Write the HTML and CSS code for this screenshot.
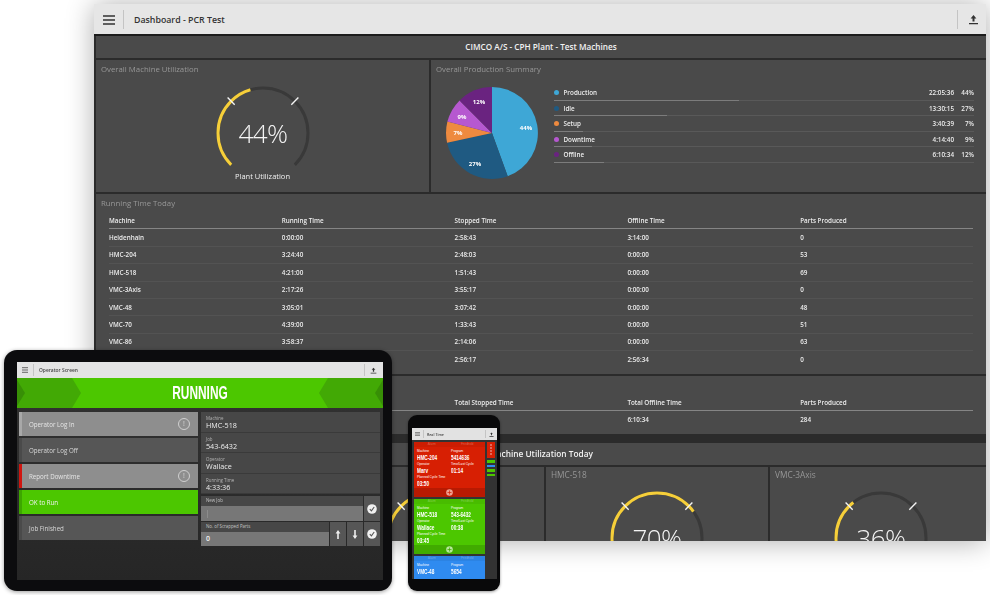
FILE: index.html
```html
<!DOCTYPE html>
<html lang="en">
<head>
    <meta charset="UTF-8">
    <title>CIMCO Dashboard</title>
    <link rel="stylesheet" href="styles.css">
</head>
<body>
    <div class="stage">
        <div class="dash">
            <div class="topbar">
                <svg class="menu-icon" width="12" height="10" viewBox="0 0 12 10"><path d="M0 1h12M0 5h12M0 9h12" stroke="#333" stroke-width="1.4"/></svg>
                <span class="bar-sep"></span>
                <span class="bar-title">Dashboard - PCR Test</span>
                <span class="bar-sep bar-sep-right"></span>
                <svg class="upload-icon" width="11" height="11" viewBox="0 0 11 11"><path d="M5.5 1 2.6 4.4h1.9v3h2v-3h1.9zM1 9h9v1.2H1z" fill="#333"/></svg>
            </div>
            <div class="panels">
                <div class="panel panel-head">CIMCO A/S - CPH Plant - Test Machines</div>
                <div class="row-top">
                    <div class="panel">
                        <div class="panel-title">Overall Machine Utilization</div>
                        <svg class="gauge" width="100" height="84" viewBox="0 0 100 84">
                            <circle class="gauge-track" cx="50" cy="50" r="45" pathLength="100" transform="rotate(135 50 50)"/>
                            <circle class="gauge-fill" cx="50" cy="50" r="45" pathLength="100" stroke-dasharray="33 67" transform="rotate(135 50 50)"/>
                            <path class="gauge-tick" d="M14.6 14.6 21.7 21.7M78.3 21.7 85.4 14.6"/>
                            <text class="gauge-num" x="50" y="60">44%</text>
                        </svg>
                        <div class="gauge-caption">Plant Utilization</div>
                    </div>
                    <div class="panel summary">
                        <div class="panel-title">Overall Production Summary</div>
                        <div class="summary-body">
                            <svg class="pie" width="94" height="94" viewBox="-47 -47 94 94">
                                <path d="M0 0V-46A46 46 0 0 1 15.7 43.2Z" fill="#3ea7d6"/>
                                <path d="M0 0 15.7 43.2A46 46 0 0 1-44.9 9.7Z" fill="#1f5a82"/>
                                <path d="M0 0-44.9 9.7A46 46 0 0 1-44.6-11.4Z" fill="#ee8a3f"/>
                                <path d="M0 0-44.6-11.4A46 46 0 0 1-32.4-32.6Z" fill="#b658d0"/>
                                <path d="M0 0-32.4-32.6A46 46 0 0 1 0-46Z" fill="#6a2380"/>
                                <text x="34" y="-3">44%</text>
                                <text x="-17" y="33">27%</text>
                                <text x="-34" y="2">7%</text>
                                <text x="-30" y="-14">9%</text>
                                <text x="-13" y="-29">12%</text>
                            </svg>
                            <div class="legend">
                                <div class="legend-row">
                                    <span class="dot dot-prod"></span><span class="legend-name">Production</span><span class="legend-time">22:05:36</span><span class="legend-pct">44%</span>
                                    <span class="legend-bar"><span style="width:44%"></span></span>
                                </div>
                                <div class="legend-row">
                                    <span class="dot dot-idle"></span><span class="legend-name">Idle</span><span class="legend-time">13:30:15</span><span class="legend-pct">27%</span>
                                    <span class="legend-bar"><span style="width:27%"></span></span>
                                </div>
                                <div class="legend-row">
                                    <span class="dot dot-setup"></span><span class="legend-name">Setup</span><span class="legend-time">3:40:39</span><span class="legend-pct">7%</span>
                                    <span class="legend-bar"><span style="width:7%"></span></span>
                                </div>
                                <div class="legend-row">
                                    <span class="dot dot-down"></span><span class="legend-name">Downtime</span><span class="legend-time">4:14:40</span><span class="legend-pct">9%</span>
                                    <span class="legend-bar"><span style="width:9%"></span></span>
                                </div>
                                <div class="legend-row">
                                    <span class="dot dot-off"></span><span class="legend-name">Offline</span><span class="legend-time">6:10:34</span><span class="legend-pct">12%</span>
                                    <span class="legend-bar"><span style="width:12%"></span></span>
                                </div>
                            </div>
                        </div>
                    </div>
                </div>
                <div class="panel panel-table">
                    <div class="panel-title">Running Time Today</div>
                    <table class="data">
                        <thead>
                            <tr><th>Machine</th><th>Running Time</th><th>Stopped Time</th><th>Offline Time</th><th>Parts Produced</th></tr>
                        </thead>
                        <tbody>
                            <tr><td>Heidenhain</td><td>0:00:00</td><td>2:58:43</td><td>3:14:00</td><td>0</td></tr>
                            <tr><td>HMC-204</td><td>3:24:40</td><td>2:48:03</td><td>0:00:00</td><td>53</td></tr>
                            <tr><td>HMC-518</td><td>4:21:00</td><td>1:51:43</td><td>0:00:00</td><td>69</td></tr>
                            <tr><td>VMC-3Axis</td><td>2:17:26</td><td>3:55:17</td><td>0:00:00</td><td>0</td></tr>
                            <tr><td>VMC-48</td><td>3:05:01</td><td>3:07:42</td><td>0:00:00</td><td>48</td></tr>
                            <tr><td>VMC-70</td><td>4:39:00</td><td>1:33:43</td><td>0:00:00</td><td>51</td></tr>
                            <tr><td>VMC-86</td><td>3:58:37</td><td>2:14:06</td><td>0:00:00</td><td>63</td></tr>
                            <tr><td></td><td></td><td>2:56:17</td><td>2:56:34</td><td>0</td></tr>
                        </tbody>
                    </table>
                </div>
                <div class="panel panel-totals">
                    <table class="data">
                        <thead>
                            <tr><th></th><th></th><th>Total Stopped Time</th><th>Total Offline Time</th><th>Parts Produced</th></tr>
                        </thead>
                        <tbody>
                            <tr><td></td><td></td><td></td><td>6:10:34</td><td>284</td></tr>
                        </tbody>
                    </table>
                </div>
                <div class="band"></div>
                <div class="panel panel-head panel-head-big">Machine Utilization Today</div>
                <div class="row-gauges">
                    <div class="panel"></div>
                    <div class="panel">
                        <svg class="gauge gauge-hidden" width="100" height="84" viewBox="0 0 100 84">
                            <circle class="gauge-track" cx="50" cy="50" r="45" pathLength="100" transform="rotate(135 50 50)"/>
                            <circle class="gauge-fill" cx="50" cy="50" r="45" pathLength="100" stroke-dasharray="41 59" transform="rotate(135 50 50)"/>
                            <path class="gauge-tick" d="M14.6 14.6 21.7 21.7M78.3 21.7 85.4 14.6"/>
                        </svg>
                    </div>
                    <div class="panel">
                        <div class="panel-title panel-title-big">HMC-518</div>
                        <svg class="gauge" width="100" height="84" viewBox="0 0 100 84">
                            <circle class="gauge-track" cx="50" cy="50" r="45" pathLength="100" transform="rotate(135 50 50)"/>
                            <circle class="gauge-fill" cx="50" cy="50" r="45" pathLength="100" stroke-dasharray="52.5 47.5" transform="rotate(135 50 50)"/>
                            <path class="gauge-tick" d="M14.6 14.6 21.7 21.7M78.3 21.7 85.4 14.6"/>
                            <text class="gauge-num" x="50" y="60">70%</text>
                        </svg>
                    </div>
                    <div class="panel">
                        <div class="panel-title panel-title-big">VMC-3Axis</div>
                        <svg class="gauge" width="100" height="84" viewBox="0 0 100 84">
                            <circle class="gauge-track" cx="50" cy="50" r="45" pathLength="100" transform="rotate(135 50 50)"/>
                            <circle class="gauge-fill" cx="50" cy="50" r="45" pathLength="100" stroke-dasharray="27 73" transform="rotate(135 50 50)"/>
                            <path class="gauge-tick" d="M14.6 14.6 21.7 21.7M78.3 21.7 85.4 14.6"/>
                            <text class="gauge-num" x="50" y="60">36%</text>
                        </svg>
                    </div>
                </div>
            </div>
        </div>

        <div class="tablet">
            <div class="tablet-screen">
                <div class="tablet-bar">
                    <svg width="6" height="6" viewBox="0 0 6 6"><path d="M0 .7h6M0 3h6M0 5.3h6" stroke="#666" stroke-width="1"/></svg>
                    <span class="bar-sep"></span>
                    <span class="tablet-bar-title">Operator Screen</span>
                    <span class="bar-sep bar-sep-right"></span>
                    <svg width="7" height="7" viewBox="0 0 11 11"><path d="M5.5 1 2.6 4.4h1.9v3h2v-3h1.9zM1 9h9v1.2H1z" fill="#333"/></svg>
                </div>
                <div class="banner">
                    <svg width="64" height="30" viewBox="0 0 64 30"><path d="M0 0H55L64 15 55 30H0Z" fill="#42a905"/><path d="M0 2 8 15 0 28Z" fill="#378f06"/></svg>
                    <span class="banner-text">RUNNING</span>
                    <svg width="64" height="30" viewBox="0 0 64 30"><path d="M64 0H9L0 15 9 30H64Z" fill="#42a905"/><path d="M64 2 56 15 64 28Z" fill="#378f06"/></svg>
                </div>
                <div class="tablet-body">
                    <div class="btn-col">
                        <div class="op-btn op-btn-light">Operator Log In<span class="alert">!</span></div>
                        <div class="op-btn">Operator Log Off</div>
                        <div class="op-btn op-btn-light op-btn-red">Report Downtime<span class="alert">!</span></div>
                        <div class="op-btn op-btn-green">OK to Run</div>
                        <div class="op-btn">Job Finished</div>
                    </div>
                    <div class="info-col">
                        <div class="info"><label>Machine</label><span>HMC-518</span></div>
                        <div class="info"><label>Job</label><span>543-6432</span></div>
                        <div class="info"><label>Operator</label><span>Wallace</span></div>
                        <div class="info"><label>Running Time</label><span>4:33:36</span></div>
                        <div class="entry">
                            <div class="entry-main">
                                <label>New Job</label>
                                <div class="entry-input"><span class="caret"></span></div>
                            </div>
                            <div class="entry-btn"><svg width="10" height="10" viewBox="0 0 10 10"><circle cx="5" cy="5" r="4.8" fill="#f1f1f1"/><path d="M2.8 5.2 4.4 6.8 7.2 3" fill="none" stroke="#555" stroke-width="1.1"/></svg></div>
                        </div>
                        <div class="entry">
                            <div class="entry-main">
                                <label>No. of Scrapped Parts</label>
                                <div class="entry-input">0</div>
                            </div>
                            <div class="entry-btn"><svg width="6" height="9" viewBox="0 0 6 9"><path d="M3 0 .6 3.4h1.6V9h1.6V3.4h1.6z" fill="#eee"/></svg></div>
                            <div class="entry-btn"><svg width="6" height="9" viewBox="0 0 6 9"><path d="M3 9 .6 5.6h1.6V0h1.6v5.6h1.6z" fill="#eee"/></svg></div>
                            <div class="entry-btn"><svg width="10" height="10" viewBox="0 0 10 10"><circle cx="5" cy="5" r="4.8" fill="#f1f1f1"/><path d="M2.8 5.2 4.4 6.8 7.2 3" fill="none" stroke="#555" stroke-width="1.1"/></svg></div>
                        </div>
                    </div>
                </div>
            </div>
        </div>

        <div class="phone">
            <div class="phone-screen">
                <div class="phone-bar">
                    <svg width="5" height="4" viewBox="0 0 8 6"><path d="M0 .7h8M0 3h8M0 5.3h8" stroke="#666" stroke-width="1.2"/></svg>
                    <span class="bar-sep"></span>
                    <span class="phone-bar-title">Real Time</span>
                    <span class="bar-sep bar-sep-right"></span>
                    <svg width="5" height="5" viewBox="0 0 11 11"><path d="M5.5 1 2.6 4.4h1.9v3h2v-3h1.9zM1 9h9v1.2H1z" fill="#333"/></svg>
                </div>
                <div class="phone-body">
                    <div class="cards">
                        <div class="card card-red">
                            <div class="card-top"><span>Alarm</span><span>Feedhold</span></div>
                            <div class="card-grid">
                                <div><label>Machine</label><b>HMC-204</b></div>
                                <div><label>Program</label><b>5414636</b></div>
                                <div><label>Operator</label><b>Marv</b></div>
                                <div><label>Time/Last Cycle</label><b>01:14</b></div>
                                <div><label>Planned Cycle Time</label><b>03:50</b></div>
                            </div>
                            <div class="card-foot"><svg width="7" height="7" viewBox="0 0 7 7"><circle cx="3.5" cy="3.5" r="3.3" fill="#f0a090"/><path d="M3.5 1.5v4M1.5 3.5h4" stroke="#d71f03" stroke-width=".7"/></svg></div>
                        </div>
                        <div class="card card-green">
                            <div class="card-top"><span>Alarm</span><span>Feedhold</span></div>
                            <div class="card-grid">
                                <div><label>Machine</label><b>HMC-518</b></div>
                                <div><label>Program</label><b>543-6432</b></div>
                                <div><label>Operator</label><b>Wallace</b></div>
                                <div><label>Time/Last Cycle</label><b>00:38</b></div>
                                <div><label>Planned Cycle Time</label><b>03:45</b></div>
                            </div>
                            <div class="card-foot"><svg width="7" height="7" viewBox="0 0 7 7"><circle cx="3.5" cy="3.5" r="3.3" fill="#b6e89a"/><path d="M3.5 1.5v4M1.5 3.5h4" stroke="#3da600" stroke-width=".7"/></svg></div>
                        </div>
                        <div class="card card-blue">
                            <div class="card-top"><span>Alarm</span><span>Feedhold</span></div>
                            <div class="card-grid">
                                <div><label>Machine</label><b>VMC-48</b></div>
                                <div><label>Program</label><b>5654</b></div>
                            </div>
                        </div>
                    </div>
                    <div class="side">
                        <div class="side-alert"></div>
                        <span class="side-bar side-green"></span>
                        <span class="side-bar side-blue"></span>
                        <span class="side-bar side-green"></span>
                        <span class="side-bar side-green"></span>
                    </div>
                </div>
            </div>
        </div>
    </div>
</body>
</html>
```
FILE: styles.css
```css
html, body {
    margin: 0;
    padding: 0;
    background-color: white;
}
body {
    font-family: "Open Sans", "Liberation Sans", sans-serif;
}
.stage {
    position: relative;
    width: 990px;
    height: 595px;
    overflow: hidden;
    filter: blur(0.3px);
}
label {
    display: block;
}

/* big dashboard window */
.dash {
    position: absolute;
    left: 94px;
    top: 4px;
    width: 892px;
    height: 537px;
    overflow: hidden;
    background-color: #2b2b2b;
    box-shadow: 0 1px 26px rgba(0,0,0,0.32);
}
.topbar {
    display: flex;
    align-items: center;
    height: 29px;
    padding: 1px 7px 0 9px;
    background-color: #e6e6e6;
    border-bottom: 2px solid #1c1c1c;
}
.bar-sep {
    width: 1px;
    align-self: stretch;
    margin: 5px 10px 5px 8px;
    background-color: #c4c4c4;
}
.bar-sep-right {
    margin-left: auto;
}
.bar-title {
    font-size: 8.8px;
    font-weight: 600;
    color: #333;
}
.panels {
    display: flex;
    flex-direction: column;
    gap: 2px;
    padding: 0 0 0 2px;
}
.panel {
    background-color: #4a4a4a;
    overflow: hidden;
}
.panel-head {
    height: 22px;
    line-height: 22px;
    text-align: center;
    font-size: 8.2px;
    font-weight: 600;
    color: #f2f2f2;
}
.panel-title {
    padding: 4px 5px 0;
    font-size: 7.8px;
    line-height: 11px;
    color: #979797;
}
.row-top {
    display: flex;
    gap: 2px;
    height: 132px;
}
.row-top > .panel {
    width: 333px;
    text-align: center;
}
.row-top > .panel .panel-title {
    text-align: left;
}
.row-top > .summary {
    width: 555px;
    text-align: left;
}

/* gauges */
.gauge {
    display: block;
    margin: 8px auto 0;
}
.gauge-track, .gauge-fill {
    fill: none;
    stroke-width: 3;
}
.gauge-track {
    stroke: #393939;
    stroke-dasharray: 75 25;
}
.gauge-fill {
    stroke: #f6cf3a;
}
.gauge-tick {
    stroke: #f4f4f4;
    stroke-width: 1.4;
}
.gauge-num {
    fill: #f4f4f4;
    font-size: 26px;
    font-weight: 300;
    text-anchor: middle;
    letter-spacing: -0.6px;
}
.gauge-caption {
    margin-top: 4px;
    font-size: 7.5px;
    font-weight: 500;
    color: #f0f0f0;
}

/* pie and legend */
.summary-body {
    display: flex;
    margin-top: 11px;
    padding-left: 14px;
}
.pie text {
    fill: white;
    font-size: 6px;
    font-weight: 700;
    text-anchor: middle;
}
.legend {
    width: 420px;
    margin: -1px 0 0 15px;
}
.legend-row {
    position: relative;
    display: flex;
    align-items: center;
    height: 15.5px;
    font-size: 6.3px;
    font-weight: 600;
    color: #ececec;
}
.dot {
    width: 5px;
    height: 5px;
    margin: 0 4.5px 0 0;
    border-radius: 50%;
}
.dot-prod { background-color: #3ea7d6; }
.dot-idle { background-color: #1f5a82; }
.dot-setup { background-color: #ee8a3f; }
.dot-down { background-color: #b658d0; }
.dot-off { background-color: #6a2380; }
.legend-name {
    flex: 1;
}
.legend-time {
    width: 40px;
    text-align: right;
}
.legend-pct {
    width: 20px;
    text-align: right;
}
.legend-bar {
    position: absolute;
    left: 0;
    right: 0;
    bottom: 0;
    height: 1px;
    background-color: #595959;
}
.legend-bar span {
    display: block;
    height: 1px;
    background-color: #7c7c7c;
}

/* tables */
.panel-table {
    height: 180px;
}
.panel-table .data {
    margin-top: 3px;
}
.panel-totals {
    height: 58px;
    padding-top: 18px;
    box-sizing: border-box;
}
.data {
    width: 864px;
    margin-left: 13px;
    table-layout: fixed;
    border-collapse: collapse;
    font-size: 6.3px;
    font-weight: 600;
    color: #ececec;
}
.data th, .data td {
    padding: 0;
    text-align: left;
    height: 16.4px;
    border-bottom: 1px solid #535353;
}
.data th {
    border-bottom-color: #858585;
    font-weight: 600;
}
.data tbody tr:last-child td {
    border-bottom: none;
}

.band {
    height: 5px;
    margin-left: -2px;
}
.panel-head-big {
    font-size: 8.3px;
}
.row-gauges {
    display: grid;
    grid-template-columns: 224px 222px 222px 222px;
    gap: 2px;
    height: 74px;
}
.panel-title-big {
    padding-top: 2px;
    font-size: 8.3px;
    color: #979797;
}
.row-gauges .gauge {
    margin-top: 8px;
}
.row-gauges .gauge-hidden {
    margin-top: 21px;
}

/* tablet */
.tablet {
    position: absolute;
    left: 4px;
    top: 350px;
    width: 366px;
    height: 218px;
    padding: 12px 9px 11px 13px;
    border-radius: 13px;
    background-color: #0c0c0e;
    box-shadow: 0 1px 4px rgba(0,0,0,0.4);
}
.tablet-screen {
    height: 218px;
    background: linear-gradient(#333, #262626);
}
.tablet-bar {
    display: flex;
    align-items: center;
    height: 16px;
    padding: 0 6px 0 5px;
    background-color: #e4e4e4;
}
.tablet-bar .bar-sep {
    margin: 2px 5px;
}
.tablet-bar .bar-sep-right {
    margin-left: auto;
}
.tablet-bar-title {
    font-size: 4.9px;
    font-weight: 600;
    color: #444;
}
.banner {
    display: flex;
    align-items: center;
    justify-content: space-between;
    height: 30px;
    background-color: #4cc700;
}
.banner svg {
    display: block;
}
.banner-text {
    display: inline-block;
    font-family: "Liberation Sans", sans-serif;
    font-size: 18px;
    font-weight: 700;
    color: white;
    transform: scaleX(0.66);
}
.tablet-body {
    display: flex;
    gap: 3px;
    padding: 4px 3px 0 2px;
}
.btn-col, .info-col {
    flex: 1;
    display: flex;
    flex-direction: column;
}
.btn-col {
    gap: 2px;
}
.op-btn {
    display: flex;
    align-items: center;
    justify-content: space-between;
    height: 24px;
    padding: 0 8px 0 7px;
    background-color: #565656;
    border-left: 3px solid #4a4a4a;
    font-size: 6.2px;
    color: #d8d8d8;
}
.op-btn-light {
    background-color: #8e8e8e;
    border-left-color: #a8a8a8;
    color: #e6e6e6;
}
.op-btn-red {
    border-left-color: #d01510;
}
.op-btn-green {
    background-color: #4cc700;
    border-left-color: #3da600;
    color: #f2f2f2;
}
.alert {
    width: 10px;
    height: 10px;
    line-height: 10px;
    border: 1px solid #d0d0d0;
    border-radius: 50%;
    text-align: center;
    font-size: 7px;
    color: #d8d8d8;
}
.info-col {
    gap: 0;
}
.info {
    height: 20.6px;
    padding: 4px 5px 0;
    box-sizing: border-box;
    background-color: #474747;
    border-bottom: 1px solid #3a3a3a;
}
.info label {
    font-size: 4.4px;
    line-height: 5px;
    color: #b4b4b4;
}
.info span {
    display: block;
    font-size: 7.2px;
    line-height: 9px;
    color: #ededed;
}
.entry {
    display: flex;
    height: 24.5px;
    margin-top: 1px;
}
.info + .entry {
    margin-top: 2px;
}
.entry-main {
    flex: 1;
    background-color: #474747;
}
.entry-main label {
    height: 10px;
    padding-left: 5px;
    font-size: 4.4px;
    line-height: 9px;
    color: #c4c4c4;
}
.entry-input {
    height: 14.5px;
    line-height: 14.5px;
    padding-left: 5px;
    background-color: #777;
    font-size: 7px;
    font-weight: 600;
    color: #f2f2f2;
}
.caret {
    display: inline-block;
    width: 1px;
    height: 8px;
    margin-left: 1px;
    vertical-align: middle;
    background-color: #8c8c8c;
}
.entry-btn {
    display: flex;
    align-items: center;
    justify-content: center;
    width: 16px;
    margin-left: 1px;
    background-color: #565656;
}

/* phone */
.phone {
    position: absolute;
    left: 408px;
    top: 415px;
    width: 85px;
    height: 151px;
    padding: 13px 3px 12px 4px;
    border-radius: 9px;
    background-color: #09090a;
    box-shadow: 0 1px 3px rgba(0,0,0,0.4);
}
.phone-screen {
    height: 151px;
    overflow: hidden;
    background-color: #333;
}
.phone-bar {
    display: flex;
    align-items: center;
    height: 12px;
    padding: 0 3px;
    background-color: #e2e2e2;
}
.phone-bar .bar-sep {
    margin: 2px 3px;
}
.phone-bar .bar-sep-right {
    margin-left: auto;
}
.phone-bar-title {
    font-size: 3.6px;
    font-weight: 600;
    color: #444;
}
.phone-body {
    display: flex;
    gap: 2px;
    padding: 2px 0 0 2px;
}
.cards {
    display: flex;
    flex-direction: column;
    gap: 2px;
    width: 71px;
}
.card {
    flex: none;
    height: 55px;
    color: white;
    font-family: "Liberation Sans", sans-serif;
}
.card-red { background-color: #d71f03; }
.card-green { background-color: #4cc700; }
.card-blue { background-color: #2f8bf0; }
.card-top {
    display: grid;
    grid-template-columns: 1fr 1fr;
    height: 5px;
    line-height: 5px;
    text-align: center;
    font-size: 3px;
    color: rgba(255,255,255,0.3);
    background-color: rgba(0,0,0,0.05);
}
.card-grid {
    display: grid;
    grid-template-columns: 34px 1fr;
    row-gap: 1px;
    height: 38px;
    padding: 3px 0 0 3px;
}
.card-grid label {
    font-size: 3.2px;
    line-height: 3.5px;
    white-space: nowrap;
}
.card-grid b {
    display: block;
    font-size: 7.4px;
    line-height: 8px;
    white-space: nowrap;
    transform: scaleX(0.64);
    transform-origin: left;
}
.card-foot {
    display: flex;
    align-items: center;
    justify-content: center;
    height: 9px;
    background-color: rgba(0,0,0,0.14);
}
.side {
    display: flex;
    flex-direction: column;
    gap: 2px;
    width: 8px;
}
.side-alert {
    height: 16px;
    background: repeating-linear-gradient(#e06a5c 0 2px, #d71f03 2px 3px) center / 2px 12px no-repeat, #d71f03;
}
.side-bar {
    height: 2.5px;
}
.side-green { background-color: #4cc700; }
.side-blue { background-color: #2f8bf0; }
```
